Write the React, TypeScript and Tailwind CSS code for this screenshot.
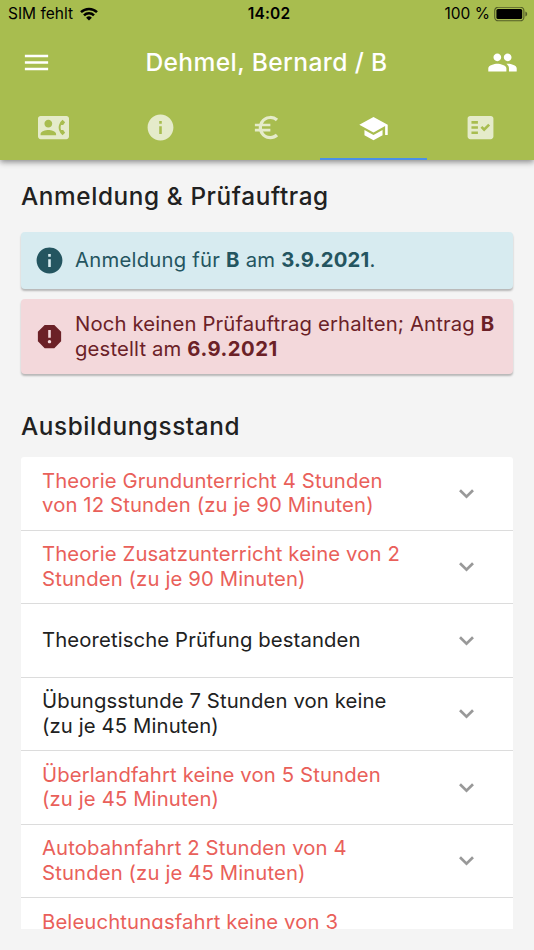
import React from "react";
import {
  MdMenu,
  MdPeople,
  MdContactPhone,
  MdInfo,
  MdEuroSymbol,
  MdSchool,
  MdFactCheck,
  MdReport,
} from "react-icons/md";

const tabs = [
  { name: "contact", Icon: MdContactPhone },
  { name: "info", Icon: MdInfo },
  { name: "payments", Icon: MdEuroSymbol },
  { name: "training", Icon: MdSchool, active: true },
  { name: "checklist", Icon: MdFactCheck },
];

const rows = [
  { lines: ["Theorie Grundunterricht 4 Stunden", "von 12 Stunden (zu je 90 Minuten)"], open: true },
  { lines: ["Theorie Zusatzunterricht keine von 2", "Stunden (zu je 90 Minuten)"], open: true },
  { lines: ["Theoretische Prüfung bestanden"], open: false },
  { lines: ["Übungsstunde 7 Stunden von keine", "(zu je 45 Minuten)"], open: false },
  { lines: ["Überlandfahrt keine von 5 Stunden", "(zu je 45 Minuten)"], open: true },
  { lines: ["Autobahnfahrt 2 Stunden von 4", "Stunden (zu je 45 Minuten)"], open: true },
  { lines: ["Beleuchtungsfahrt keine von 3"], open: true },
];

function Chevron() {
  return (
    <svg width="29" height="29" viewBox="0 0 29 29" fill="none" stroke="#999999" strokeWidth="2.7">
      <path d="M8 11.2l6.5 6.5 6.5-6.5" />
    </svg>
  );
}

function StatusBar() {
  return (
    <div className="grid h-7 grid-cols-3 items-center pr-[6px] pl-[8px] text-[15.5px] text-black">
      <div className="flex items-center gap-[7px]">
        <span>SIM fehlt</span>
        <svg width="18" height="14" viewBox="0 0 18 14" fill="none" stroke="currentColor" strokeWidth="2.5">
          <path d="M1 5.2a11.4 11.4 0 0 1 16 0" />
          <path d="M4 8.3a7.1 7.1 0 0 1 10 0" />
          <path d="M9 13.6L6.1 10.7a4.1 4.1 0 0 1 5.8 0Z" fill="currentColor" stroke="none" />
        </svg>
      </div>
      <span className="pl-[2px] text-center font-semibold tracking-[0.2px]">14:02</span>
      <div className="flex items-center justify-end gap-[4px]">
        <span className="whitespace-nowrap">100 %</span>
        <svg width="34" height="15" viewBox="0 0 34 15">
          <rect x="0.7" y="0.2" width="29.2" height="13.6" rx="3.6" fill="none" stroke="#000" strokeOpacity="0.5" strokeWidth="1.1" />
          <rect x="2.4" y="2" width="25.8" height="10" rx="1.6" />
          <path d="M31.4 4.5v5c1.2-.4 1.8-1.4 1.8-2.5s-.6-2.1-1.8-2.5Z" fillOpacity="0.5" />
        </svg>
      </div>
    </div>
  );
}

export default function App() {
  return (
    <div className="flex h-[950px] w-[534px] flex-col overflow-hidden bg-[#f4f4f4] font-['Inter',sans-serif] text-[#212121]">
      <header className="z-10 h-[160px] shrink-0 bg-[#a8bd4f] shadow-[0_2px_6px_rgba(0,0,0,0.45)]">
        <StatusBar />
        <div className="flex h-[68px] items-center justify-between pr-[16px] pl-[21px] text-white">
          <MdMenu size={31} />
          <h1 className="pr-[6px] text-[24.6px] font-medium tracking-[0.38px]">Dehmel, Bernard / B</h1>
          <MdPeople size={31} />
        </div>
        <nav className="grid h-16 grid-cols-5">
          {tabs.map(({ name, Icon, active }) => (
            <div
              key={name}
              className={
                active
                  ? "flex items-center justify-center border-b-2 border-[#4a90e8] pt-[2px] text-white"
                  : "flex items-center justify-center pb-px text-white/70"
              }
            >
              <Icon size={31} />
            </div>
          ))}
        </nav>
      </header>

      <main className="flex min-h-0 flex-1 flex-col px-[21px] pb-[21px]">
        <h2 className="mt-[19px] h-[34px] shrink-0 text-[24.3px] leading-[34px] font-medium tracking-[0.62px]">
          Anmeldung &amp; Prüfauftrag
        </h2>

        <section className="mt-[19px] flex h-[57px] shrink-0 items-center gap-[10.5px] rounded-[4px] bg-[#d7ebf0] pl-[12.5px] text-[20.3px] text-[#245560] shadow-[0_2px_2px_rgba(0,0,0,0.25)]">
          <MdInfo size={31} className="shrink-0" />
          <p className="tracking-[0.23px]">
            Anmeldung für <b className="font-bold">B</b> am <b className="font-bold">3.9.2021</b>.
          </p>
        </section>

        <section className="mt-[10px] flex h-[75px] shrink-0 items-center gap-[10.5px] rounded-[4px] bg-[#f3d8db] pl-[12.5px] text-[20.3px] leading-[24.6px] text-[#6b2127] shadow-[0_2px_2px_rgba(0,0,0,0.25)]">
          <MdReport size={31} className="shrink-0" />
          <p className="pt-[0.6px] tracking-[0.15px] whitespace-nowrap">
            Noch keinen Prüfauftrag erhalten; Antrag <b className="font-bold">B</b>
            <br />
            gestellt am <b className="font-bold tracking-[0.5px]">6.9.2021</b>
          </p>
        </section>

        <h2 className="mt-[35px] h-[34px] shrink-0 text-[24.3px] leading-[34px] font-medium tracking-[0.6px]">
          Ausbildungsstand
        </h2>

        <ul className="mt-[14px] min-h-0 flex-1 overflow-hidden rounded-t-[3px] bg-white">
          {rows.map(({ lines, open }, i) => (
            <li
              key={lines[0]}
              className={
                i === rows.length - 1
                  ? "flex items-start pt-[12px] pl-[21px]"
                  : "flex h-[73.5px] items-center justify-between border-b-[1.4px] border-[#dcdcdc] pr-[32px] pl-[21px]"
              }
            >
              <p
                className={
                  open
                    ? "text-[20.3px] leading-[24.6px] tracking-[0.13px] whitespace-nowrap text-[#e9605a]"
                    : "text-[20.3px] leading-[24.6px] tracking-[0.12px] whitespace-nowrap"
                }
              >
                {lines.map((line) => (
                  <span key={line} className="block">
                    {line}
                  </span>
                ))}
              </p>
              {i < rows.length - 1 && <Chevron />}
            </li>
          ))}
        </ul>
      </main>
    </div>
  );
}
